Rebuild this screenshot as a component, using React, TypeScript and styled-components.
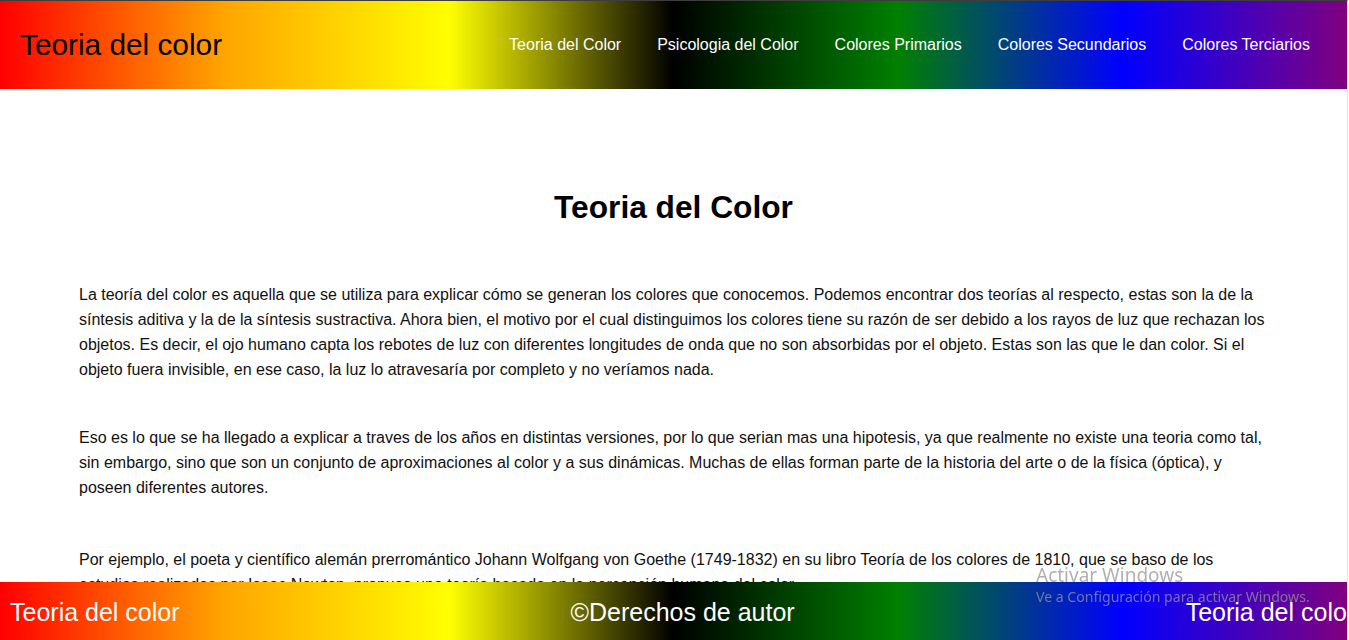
import React from "react";
import styled, { createGlobalStyle } from "styled-components";

const GlobalStyle = createGlobalStyle`
  html, body {
    margin: 0;
    padding: 0;
    background: #ffffff;
  }
  body {
    font-family: "Liberation Sans", Arial, sans-serif;
    overflow: hidden;
  }
`;

const rainbow = "linear-gradient(to right, red, orange, yellow, black, green, blue, purple)";

const Page = styled.div`
  width: 1348px;
  min-height: 100vh;
  border-top: 1px solid #3d3d3d;
  border-right: 1px solid #e4e4e4;
  box-sizing: border-box;
`;

const Header = styled.header`
  height: 88px;
  background: ${rainbow};
  display: flex;
  align-items: center;
  justify-content: space-between;
  padding: 0 37px 0 20px;
`;

const Brand = styled.div`
  font-size: 29.8px;
  color: #000;
`;

const Nav = styled.nav`
  display: flex;
  gap: 36px;
`;

const NavLink = styled.a`
  color: #fff;
  font-size: 16px;
  text-decoration: none;
`;

const Main = styled.main`
  padding: 100px 79px 120px;
`;

const Title = styled.h1`
  margin: 0 0 56px;
  text-align: center;
  font-size: 31.7px;
  line-height: 37px;
  font-weight: bold;
  color: #000;
`;

const Paragraph = styled.p<{ $after: number }>`
  margin: 0 0 ${(p) => p.$after}px;
  font-size: 16px;
  line-height: 25px;
  color: #111;
`;

const Footer = styled.footer`
  position: fixed;
  left: 0;
  bottom: 0;
  width: 1347px;
  height: 58px;
  background: ${rainbow};
  display: flex;
  align-items: center;
  gap: 391px;
  padding: 2px 0 0 10px;
  box-sizing: border-box;
  overflow: hidden;
  white-space: nowrap;
`;

const FooterText = styled.span`
  color: #fff;
  font-size: 25px;
  flex: none;
`;

const Watermark = styled.div`
  position: fixed;
  left: 1036px;
  top: 564px;
  font-family: "Noto Sans", "Open Sans", sans-serif;
  color: rgba(150, 150, 150, 0.75);
  pointer-events: none;
  line-height: 1.2;
`;

const WatermarkTitle = styled.div`
  font-size: 19px;
  margin-bottom: 2px;
`;

const WatermarkSub = styled.div`
  font-size: 14.1px;
`;

const links = [
  "Teoria del Color",
  "Psicologia del Color",
  "Colores Primarios",
  "Colores Secundarios",
  "Colores Terciarios",
];

export default function App() {
  return (
    <>
      <GlobalStyle />
      <Page>
        <Header>
          <Brand>Teoria del color</Brand>
          <Nav>
            {links.map((l) => (
              <NavLink key={l} href="#">
                {l}
              </NavLink>
            ))}
          </Nav>
        </Header>
        <Main>
          <Title>Teoria del Color</Title>
          <Paragraph $after={43}>
            La teoría del color es aquella que se utiliza para explicar cómo se generan los colores que
            conocemos. Podemos encontrar dos teorías al respecto, estas son la de la síntesis aditiva y la de
            la síntesis sustractiva. Ahora bien, el motivo por el cual distinguimos los colores tiene su razón
            de ser debido a los rayos de luz que rechazan los objetos. Es decir, el ojo humano capta los
            rebotes de luz con diferentes longitudes de onda que no son absorbidas por el objeto. Estas son las
            que le dan color. Si el objeto fuera invisible, en ese caso, la luz lo atravesaría por completo y no
            veríamos nada.
          </Paragraph>
          <Paragraph $after={47}>
            Eso es lo que se ha llegado a explicar a traves de los años en distintas versiones, por lo que
            serian mas una hipotesis, ya que realmente no existe una teoria como tal, sin embargo, sino que son
            un conjunto de aproximaciones al color y a sus dinámicas. Muchas de ellas forman parte de la
            historia del arte o de la física (óptica), y poseen diferentes autores.
          </Paragraph>
          <Paragraph $after={45}>
            Por ejemplo, el poeta y científico alemán prerromántico Johann Wolfgang von Goethe (1749-1832) en su
            libro Teoría de los colores de 1810, que se baso de los estudios realizados por Isaac Newton,
            propuso una teoría basada en la percepción humana del color.
          </Paragraph>
        </Main>
      </Page>
      <Footer>
        <FooterText>Teoria del color</FooterText>
        <FooterText>©Derechos de autor</FooterText>
        <FooterText>Teoria del color</FooterText>
      </Footer>
      <Watermark>
        <WatermarkTitle>Activar Windows</WatermarkTitle>
        <WatermarkSub>Ve a Configuración para activar Windows.</WatermarkSub>
      </Watermark>
    </>
  );
}
